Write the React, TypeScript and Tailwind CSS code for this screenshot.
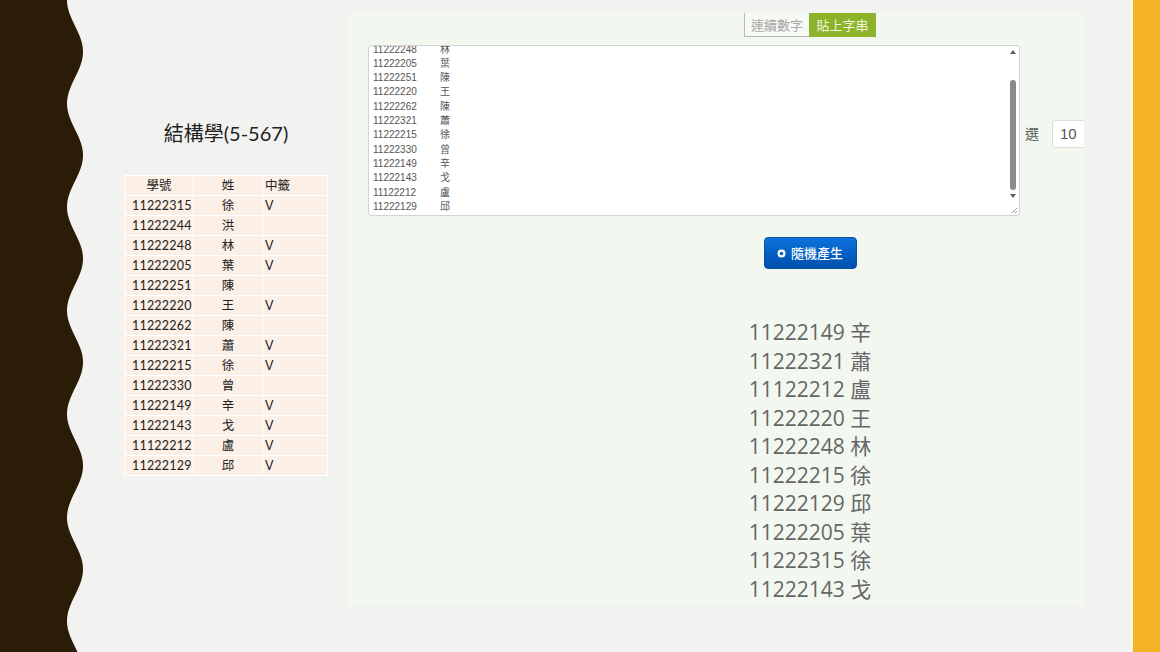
import React from "react";

const rows: [string, string, boolean][] = [
  ["11222315", "徐", true],
  ["11222244", "洪", false],
  ["11222248", "林", true],
  ["11222205", "葉", true],
  ["11222251", "陳", false],
  ["11222220", "王", true],
  ["11222262", "陳", false],
  ["11222321", "蕭", true],
  ["11222215", "徐", true],
  ["11222330", "曾", false],
  ["11222149", "辛", true],
  ["11222143", "戈", true],
  ["11122212", "盧", true],
  ["11222129", "邱", true],
];

const results: [string, string][] = [
  ["11222149", "辛"],
  ["11222321", "蕭"],
  ["11122212", "盧"],
  ["11222220", "王"],
  ["11222248", "林"],
  ["11222215", "徐"],
  ["11222129", "邱"],
  ["11222205", "葉"],
  ["11222315", "徐"],
  ["11222143", "戈"],
];

function wavePath(): string {
  const pts: string[] = ["M0 0"];
  for (let y = 0; y <= 652; y += 2) {
    const x = 75 - 8 * Math.cos((2 * Math.PI * y) / 103.5);
    pts.push(`L${x.toFixed(2)} ${y}`);
  }
  pts.push("L0 652 Z");
  return pts.join(" ");
}

export default function App() {
  return (
    <div className="w-[1160px] h-[652px] bg-[#f2f2f1] flex overflow-hidden">
      <svg width="84" height="652" viewBox="0 0 84 652" className="shrink-0">
        <path d={wavePath()} fill="#2a1c06" />
      </svg>

      {/* Left column */}
      <div className="w-[263px] shrink-0 pl-[40px] pt-[119px]">
        <div className="w-[204px] h-[28px] text-center text-[20px] leading-[28px] text-[#222] [font-family:Lato,'Noto_Sans_CJK_TC',sans-serif]">
          結構學(5-567)
        </div>
        <div className="mt-[28px] w-[204px] flex flex-col gap-px bg-white p-px text-[12.5px] text-[#222] [font-family:Lato,'Noto_Sans_CJK_TC',sans-serif]">
          <div className="flex gap-px h-[19px]">
            <div className="w-[68px] bg-[#fcefe6] text-center leading-[19px]">學號</div>
            <div className="w-[68px] bg-[#fcefe6] text-center leading-[19px]">姓</div>
            <div className="flex-1 bg-[#fcefe6] pl-[2px] leading-[19px]">中籤</div>
          </div>
          {rows.map(([id, n, v], i) => (
            <div key={i} className="flex gap-px h-[19px]">
              <div className="w-[68px] bg-[#fcefe6] pl-[7px] leading-[19px] tracking-[0.2px]">{id}</div>
              <div className="w-[68px] bg-[#fcefe6] text-center leading-[19px]">{n}</div>
              <div className="flex-1 bg-[#fcefe6] pl-[2px] leading-[19px]">{v ? "V" : ""}</div>
            </div>
          ))}
        </div>
      </div>

      {/* Main panel */}
      <div className="mt-[13px] w-[737px] h-[593px] shrink-0 bg-[#f2f8ef] overflow-hidden">
        <div className="w-[884px] ml-[21px] flex flex-col items-center">
          <div className="flex h-[24px] text-[13px] [font-family:'Noto_Sans_CJK_TC',sans-serif]">
            <div className="w-[65px] border-l border-b border-[#b8b8b8] bg-[#f6f9f4] text-[#a8a8a8] flex items-center justify-center">
              連續數字
            </div>
            <div className="w-[67px] bg-[#8db32b] text-[#eef6dc] flex items-center justify-center">
              貼上字串
            </div>
          </div>

          <div className="mt-[8px] w-full flex items-center">
            <div className="relative w-[652px] h-[171px] bg-white border border-[#d4d4d4] rounded-[3px] overflow-hidden flex">
              <div className="flex-1 overflow-hidden">
                <div className="mt-[-32px] pl-[4px] text-[10px] leading-[14.3px] text-[#555] [font-family:'Liberation_Sans','Noto_Sans_CJK_TC',sans-serif]">
                  {rows.map(([id, n], i) => (
                    <div key={i} className="flex">
                      <span className="w-[67px]">{id}</span>
                      <span>{n}</span>
                    </div>
                  ))}
                </div>
              </div>
              <div className="w-[13px] flex flex-col items-center pt-[3px]">
                <svg width="8" height="6" viewBox="0 0 8 6">
                  <path d="M4 1 L7 5 L1 5 Z" fill="#606060" />
                </svg>
                <div className="mt-[25px] w-[6px] h-[110px] rounded-full bg-[#8a8a8a]" />
                <svg width="8" height="6" viewBox="0 0 8 6" className="mt-[3px]">
                  <path d="M1 1 L7 1 L4 5 Z" fill="#606060" />
                </svg>
              </div>
              <svg width="8" height="8" viewBox="0 0 8 8" className="absolute right-[1px] bottom-[1px]">
                <path d="M7 2 L2 7 M7 5 L5 7" stroke="#999" strokeWidth="1" />
              </svg>
            </div>
            <div className="ml-[5px] mt-[5px] text-[14px] text-[#555] [font-family:'Noto_Sans_CJK_TC',sans-serif]">選</div>
            <div className="ml-[13px] mt-[7px] w-[70px] h-[28px] bg-white border border-[#dcdcdc] rounded-[3px] pl-[7px] flex items-center text-[15px] text-[#555] [font-family:'Liberation_Sans',sans-serif]">
              10
            </div>
          </div>

          <button className="mt-[21px] w-[93px] h-[32px] rounded-[4px] bg-gradient-to-b from-[#0d73dc] to-[#004fae] border border-[#0a4fa0] flex items-center justify-center gap-[5px] text-white text-[13px] font-medium [font-family:'Noto_Sans_CJK_TC',sans-serif]">
            <svg width="9" height="9" viewBox="0 0 9 9">
              <circle cx="4.5" cy="4.5" r="4" fill="white" />
              <circle cx="4.5" cy="4.5" r="1.8" fill="#0a5fc4" />
            </svg>
            隨機產生
          </button>

          <div className="mt-[49px] flex flex-col items-center text-[21px] leading-[28.5px] text-[#666] [font-family:'Open_Sans','Noto_Sans_CJK_TC',sans-serif]">
            {results.map(([id, n], i) => (
              <div key={i}>
                {id} {n}
              </div>
            ))}
          </div>
        </div>
      </div>

      <div className="w-[49px] shrink-0" />
      <div className="w-[27px] shrink-0 bg-[#f5b224]" />
    </div>
  );
}
